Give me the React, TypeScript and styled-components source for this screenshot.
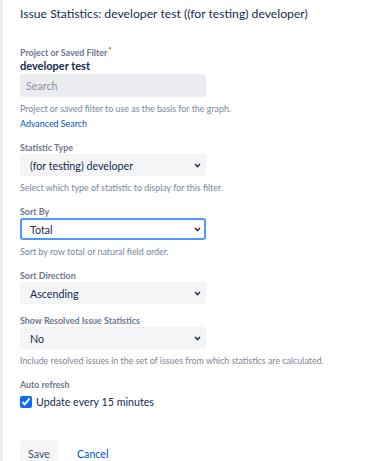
import React from 'react';
import styled, { createGlobalStyle } from 'styled-components';

const GlobalStyle = createGlobalStyle`
  html, body {
    margin: 0;
    padding: 0;
    background: #ffffff;
  }
  body {
    font-family: Lato, "Noto Sans", sans-serif;
    color: #172b4d;
  }
`;

const Page = styled.div`
  display: flex;
  height: 461px;
  overflow: hidden;
  border-left: 3px solid #ebecf0;
  box-sizing: border-box;
`;

const Form = styled.form`
  display: flex;
  flex-direction: column;
  padding: 4px 0 0 17px;
  width: 100%;
`;

const Title = styled.h2`
  margin: 0 0 22px;
  font-size: 12.2px;
  font-weight: 400;
  line-height: 20px;
  color: #172b4d;
`;

const Field = styled.div`
  display: flex;
  flex-direction: column;
  margin-bottom: 10px;
`;

const Label = styled.label`
  font-size: 8.9px;
  font-weight: 700;
  line-height: 13px;
  color: #6b778c;
`;

const Required = styled.span`
  color: #de350b;
  font-size: 8px;
  vertical-align: top;
  line-height: 8px;
  margin-left: 1px;
`;

const Value = styled.div`
  font-size: 11px;
  font-weight: 700;
  line-height: 17px;
  margin-top: -2px;
`;

const SearchInput = styled.input`
  box-sizing: border-box;
  width: 186px;
  height: 23px;
  border: none;
  border-radius: 3px;
  background: #ebecf0;
  padding: 0 6px;
  font-family: inherit;
  font-size: 10.7px;
  color: #172b4d;
  outline: none;
  &::placeholder {
    color: #8993a4;
  }
`;

const SelectBox = styled.div<{ $focused?: boolean }>`
  box-sizing: border-box;
  width: 186px;
  height: 22px;
  display: flex;
  align-items: center;
  justify-content: space-between;
  padding: 0 ${(props) => (props.$focused ? 3 : 4)}px 0 ${(props) => (props.$focused ? 8 : 9)}px;
  border-radius: 3px;
  background: ${(props) => (props.$focused ? '#ffffff' : '#f4f5f7')};
  border: ${(props) => (props.$focused ? '2px solid #4c9aff' : '1px solid #f1f2f4')};
  font-size: 10.7px;
  color: #172b4d;
`;

const Hint = styled.div`
  font-size: 8.9px;
  line-height: 14px;
  color: #7a869a;
  margin-top: 5px;
`;

const Link = styled.a`
  font-size: 8.9px;
  line-height: 14px;
  color: #0052cc;
  text-decoration: none;
  margin-top: 1px;
`;

const CheckRow = styled.label`
  display: flex;
  align-items: center;
  font-size: 10.7px;
  line-height: 20px;
  color: #172b4d;
  margin-top: 1px;
`;

const Checkbox = styled.input`
  width: 12px;
  height: 12px;
  margin: 0 4px 0 0;
  accent-color: #0a6cf5;
`;

const Actions = styled.div`
  display: flex;
  align-items: center;
  margin-top: 18px;
`;

const Button = styled.button<{ $subtle?: boolean }>`
  font-family: inherit;
  font-size: 10.7px;
  height: 26px;
  padding: 0 ${(props) => (props.$subtle ? 0 : 8)}px;
  border: none;
  border-radius: 3px;
  background: ${(props) => (props.$subtle ? 'transparent' : '#f4f5f7')};
  color: ${(props) => (props.$subtle ? '#0052cc' : '#42526e')};
  margin-right: ${(props) => (props.$subtle ? 0 : 19)}px;
`;

const Chevron = () => (
  <svg width="7" height="5" viewBox="0 0 7 5">
    <path d="M1 1 L3.5 3.5 L6 1" fill="none" stroke="#253858" strokeWidth="1.6" />
  </svg>
);

const Select = ({ value, focused }: { value: string; focused?: boolean }) => (
  <SelectBox $focused={focused}>
    <span>{value}</span>
    <Chevron />
  </SelectBox>
);

const App = (): JSX.Element => (
  <Page>
    <GlobalStyle />
    <Form onSubmit={(e) => e.preventDefault()}>
      <Title>Issue Statistics: developer test ((for testing) developer)</Title>

      <Field>
        <Label>
          Project or Saved Filter<Required>*</Required>
        </Label>
        <Value>developer test</Value>
        <SearchInput placeholder="Search" />
        <Hint>Project or saved filter to use as the basis for the graph.</Hint>
        <Link href="#">Advanced Search</Link>
      </Field>

      <Field>
        <Label>Statistic Type</Label>
        <Select value="(for testing) developer" />
        <Hint>Select which type of statistic to display for this filter.</Hint>
      </Field>

      <Field>
        <Label>Sort By</Label>
        <Select value="Total" focused />
        <Hint>Sort by row total or natural field order.</Hint>
      </Field>

      <Field>
        <Label>Sort Direction</Label>
        <Select value="Ascending" />
      </Field>

      <Field>
        <Label>Show Resolved Issue Statistics</Label>
        <Select value="No" />
        <Hint>Include resolved issues in the set of issues from which statistics are calculated.</Hint>
      </Field>

      <Field>
        <Label>Auto refresh</Label>
        <CheckRow>
          <Checkbox type="checkbox" defaultChecked />
          Update every 15 minutes
        </CheckRow>
      </Field>

      <Actions>
        <Button>Save</Button>
        <Button $subtle type="button">Cancel</Button>
      </Actions>
    </Form>
  </Page>
);

export default App;
